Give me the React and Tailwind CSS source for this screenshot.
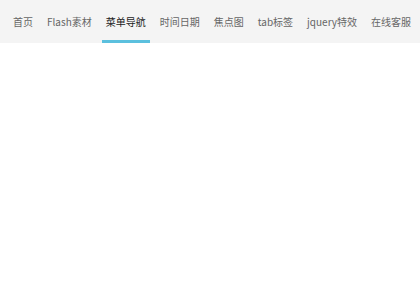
const items = ['首页', 'Flash素材', '菜单导航', '时间日期', '焦点图', 'tab标签', 'jquery特效', '在线客服']

export default function App() {
  const active = 2
  return (
    <div className="w-[420px] h-[300px] bg-white" style={{ fontFamily: '"Noto Sans CJK SC", "Noto Sans", sans-serif' }}>
      <nav className="h-[43px] bg-[#f4f4f4] flex items-stretch pl-[9px] gap-[6px] overflow-hidden">
        {items.map((label, i) => (
          <div
            key={label}
            className={`flex items-center px-[4px] pt-[2px] border-b-[3px] text-[10px] whitespace-nowrap ${
              i === active ? 'border-[#5bc0de] text-[#222]' : 'border-transparent text-[#666]'
            }`}
          >
            {label}
          </div>
        ))}
      </nav>
    </div>
  )
}
